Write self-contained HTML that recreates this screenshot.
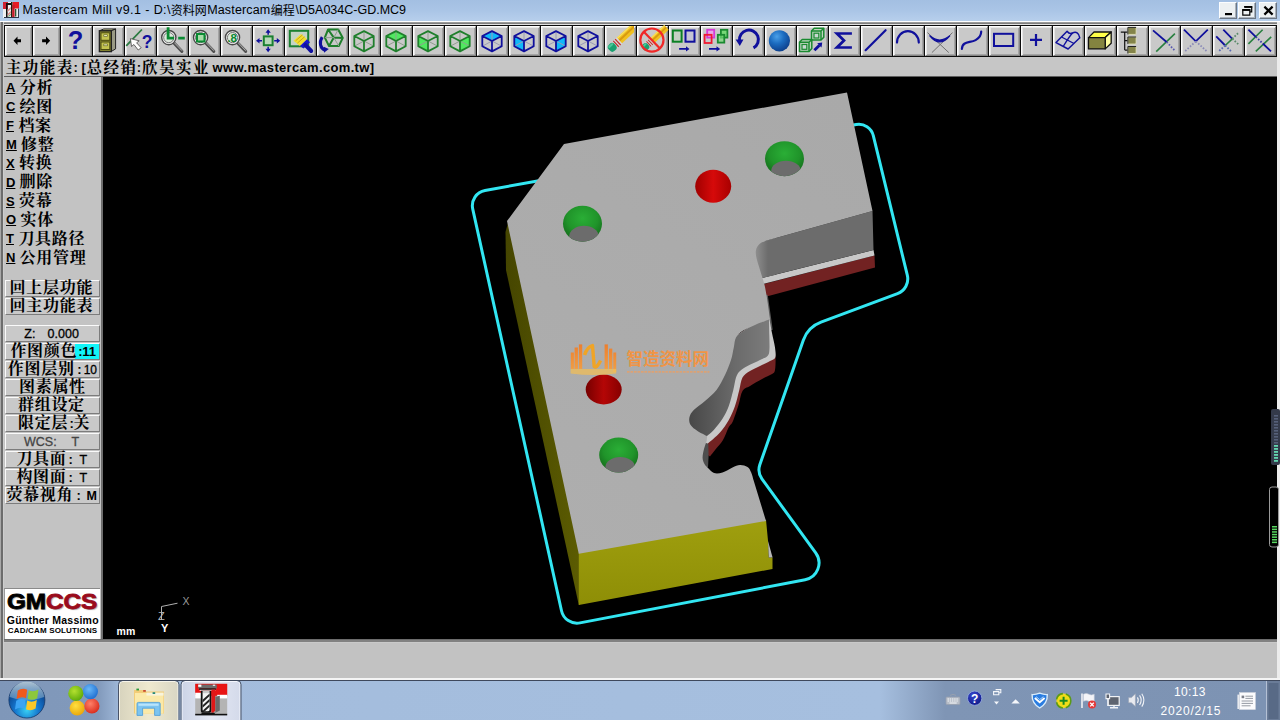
<!DOCTYPE html>
<html><head><meta charset="utf-8"><title>Mastercam Mill v9.1</title>
<style>
*{box-sizing:border-box;margin:0;padding:0}
html,body{width:1280px;height:720px;overflow:hidden;background:#c3c3c3;font-family:"Liberation Sans",sans-serif;}
svg{display:block;position:absolute;overflow:visible}
#win{position:absolute;left:0;top:0;width:1280px;height:680px;background:#c3c3c3;overflow:hidden}
#title{position:absolute;left:0;top:0;width:1280px;height:21px;background:linear-gradient(#a3bfe2,#aac5e6 50%,#b7cfec);}
#title span{position:absolute;top:3px;font-size:12.5px;line-height:14px;color:#000;white-space:pre}
.wb{position:absolute;top:2px;height:17px;background:#ecf0f2;border:1px solid;border-color:#fbfdff #6a7684 #6a7684 #fbfdff;box-shadow:inset -1px -1px 0 #aab2bc}
#lines{position:absolute;left:0;top:21px;width:1280px;height:4px;background:linear-gradient(#fff 0 1px,#9c9c9c 1px 2px,#7e7e7e 2px 3px,#e2e2e2 3px 4px)}
#edgeL{position:absolute;left:0;top:22px;width:4px;height:656px;background:linear-gradient(90deg,#a8a8a8 0 1.2px,#6c6c6c 1.2px 3px,#cdcdcd 3px 4px)}
#edgeR{position:absolute;left:1277px;top:22px;width:3px;height:658px;background:#ececec}
#tb{position:absolute;left:4px;top:25px;width:1273px;height:32px;background:#0c0c0c;}
.b{position:absolute;top:1px;height:30px;background:#c9c9c9;border:1px solid;border-color:#fdfdfd #858585 #858585 #fdfdfd;box-shadow:inset 1px 1px 0 #e6e6e6,inset -1px -1px 0 #a4a4a4}
#prompt{position:absolute;left:2px;top:57px;width:1275px;height:20px;background:#c6c6c6;border-bottom:1px solid #5e5e5e}
#prompt span{position:absolute;top:3px;font-size:13px;line-height:15px;font-weight:bold;white-space:pre;color:#000}
#panel{position:absolute;left:2px;top:77px;width:99px;height:562px;background:#c3c3c3;}
#panel .k{position:absolute;left:4px;font-size:13px;line-height:15px;font-weight:bold;color:#000;text-decoration:underline}
.pb{position:absolute;left:3px;width:95px;height:17px;background:#c9c9c9;border:1px solid;border-color:#fafafa #7c7c7c #7c7c7c #fafafa}
.pb span{position:absolute;top:1px;font-size:13px;line-height:14px;white-space:pre;color:#000}
#divid{position:absolute;left:101px;top:77px;width:2px;height:562px;background:#6e6e6e}
#view{position:absolute;left:103px;top:77px;width:1174px;height:562px;background:#000;overflow:hidden}
#status{position:absolute;left:2px;top:639px;width:1275px;height:39px;background:linear-gradient(#6c6c6c 0 1px,#818181 1px 3px,#c9c9c9 3px 4px,#c2c2c2 4px)}
#statusb{position:absolute;left:0;top:678px;width:1280px;height:2px;background:#f4f4f4}
#task{position:absolute;left:0;top:680px;width:1280px;height:40px;overflow:hidden}
#task span{position:absolute;color:#fff;font-size:12px;line-height:14px;white-space:pre}

</style></head>
<body>
<div id="win">
<div id="title">
<svg style="left:3px;top:2px" width="16" height="16" viewBox="0 0 16 16">
<rect x="0" y="0" width="16" height="16" fill="#eef0f2"/>
<rect x="0" y="0" width="5" height="7" fill="#d02030"/><rect x="9.5" y="0" width="6.5" height="6.5" fill="#e81c24"/>
<rect x="3" y="1" width="6" height="2" fill="#111"/><rect x="3" y="2" width="1.6" height="13" fill="#111"/>
<rect x="8" y="0" width="1.4" height="15" fill="#221"/><rect x="9.2" y="3" width="2.4" height="12" fill="#c41c28"/>
<path d="M4.6,8l3.2-3v2l-3.2,3zM4.6,12l3.2-3v2l-3.2,3z" fill="#e08a8a"/><path d="M4.6,14.5l3.2-3v1.6l-1.6,1.4z" fill="#6aa070"/>
<rect x="12" y="7" width="1.3" height="7.5" fill="#2a5a34"/><rect x="15" y="6.5" width="1" height="9.5" fill="#3a4656"/>
<rect x="1" y="15" width="15" height="1" fill="#2c3648"/></svg>
<span style="left:22.6px;letter-spacing:.4px">Mastercam Mill v9.1 - D:\</span>
<svg style="left:0;top:0" width="420" height="21"><g font-family="'Liberation Sans','Noto Sans CJK SC',sans-serif" font-size="12" fill="#000"><text x="170.8" y="14.6">资料网</text><text x="270.8" y="14.6">编程</text></g></svg>
<span style="left:207.2px;letter-spacing:.16px">Mastercam</span>
<span style="left:295.6px;letter-spacing:0">\D5A034C-GD.MC9</span>
<div class="wb" style="left:1219px;width:18px"><svg width="16" height="15" style="left:0;top:0"><rect x="5" y="10" width="7" height="2.2" fill="#000"/></svg></div>
<div class="wb" style="left:1238px;width:18px"><svg width="16" height="15" style="left:0;top:0"><path d="M5.7,4.2h7v4.6h-1.4M3.8,7.2h7v4.9h-7z" fill="none" stroke="#000" stroke-width="1.2"/><path d="M5.1,3.9h8.2M3.2,6.9h8.2" stroke="#000" stroke-width="1.9"/></svg></div>
<div class="wb" style="left:1259px;width:18px"><svg width="16" height="15" style="left:0;top:0"><path d="M4.4,3.6L12.6,11.6M12.6,3.6L4.4,11.6" stroke="#000" stroke-width="2.2"/></svg></div>
</div><div id="lines"></div>
<div id="tb">
<div class="b" style="left:1px;width:27px"></div>
<div class="b" style="left:29px;width:27px"></div>
<div class="b" style="left:57px;width:31px"></div>
<div class="b" style="left:89px;width:31px"></div>
<div class="b" style="left:121px;width:31px"></div>
<div class="b" style="left:153px;width:31px"></div>
<div class="b" style="left:185px;width:31px"></div>
<div class="b" style="left:217px;width:31px"></div>
<div class="b" style="left:249px;width:31px"></div>
<div class="b" style="left:281px;width:31px"></div>
<div class="b" style="left:313px;width:31px"></div>
<div class="b" style="left:345px;width:31px"></div>
<div class="b" style="left:377px;width:31px"></div>
<div class="b" style="left:409px;width:31px"></div>
<div class="b" style="left:441px;width:31px"></div>
<div class="b" style="left:473px;width:31px"></div>
<div class="b" style="left:505px;width:31px"></div>
<div class="b" style="left:537px;width:31px"></div>
<div class="b" style="left:569px;width:31px"></div>
<div class="b" style="left:601px;width:31px"></div>
<div class="b" style="left:633px;width:31px"></div>
<div class="b" style="left:665px;width:31px"></div>
<div class="b" style="left:697px;width:31px"></div>
<div class="b" style="left:729px;width:31px"></div>
<div class="b" style="left:761px;width:31px"></div>
<div class="b" style="left:793px;width:31px"></div>
<div class="b" style="left:825px;width:31px"></div>
<div class="b" style="left:857px;width:31px"></div>
<div class="b" style="left:889px;width:31px"></div>
<div class="b" style="left:921px;width:31px"></div>
<div class="b" style="left:953px;width:31px"></div>
<div class="b" style="left:985px;width:31px"></div>
<div class="b" style="left:1017px;width:31px"></div>
<div class="b" style="left:1049px;width:31px"></div>
<div class="b" style="left:1081px;width:31px"></div>
<div class="b" style="left:1113px;width:31px"></div>
<div class="b" style="left:1145px;width:31px"></div>
<div class="b" style="left:1177px;width:31px"></div>
<div class="b" style="left:1209px;width:31px"></div>
<div class="b" style="left:1241px;width:31px"></div>
</div>
<svg style="left:0;top:0" width="1280" height="60" viewBox="0 0 1280 60">
<polygon points="13.5,40.8 17.5,36.4 17.5,39.2 21,39.2 21,42.2 17.5,42.2 17.5,45.1" fill="#000"/>
<polygon points="50.2,40.8 46,36.4 46,39.2 42.1,39.2 42.1,42.2 46,42.2 46,45.1" fill="#000"/>
<text x="75.6" y="48.8" font-family="Liberation Sans" font-weight="bold" font-size="25.5" fill="#10109c" text-anchor="middle">?</text>
<polygon points="99.4,30.8 103.8,29 115.6,29 111.2,30.8" fill="#d8d8a0" stroke="#222" stroke-width="1"/>
<polygon points="111.2,30.8 115.6,29 115.6,48.9 111.2,51.5" fill="#9a9a84" stroke="#222" stroke-width="1"/>
<rect x="99.4" y="30.8" width="11.9" height="20.8" fill="#8c8c30" stroke="#222" stroke-width="1.4"/>
<rect x="101" y="32.8" width="8.8" height="7.5" fill="#c4c450" stroke="#4a4a10" stroke-width="1"/>
<rect x="103.8" y="34.8" width="3.5" height="1.8" fill="#f4f4c8" stroke="#55551a" stroke-width=".6"/>
<rect x="101" y="42" width="8.8" height="7.5" fill="#c4c450" stroke="#4a4a10" stroke-width="1"/>
<rect x="103.8" y="44" width="3.5" height="1.8" fill="#f4f4c8" stroke="#55551a" stroke-width=".6"/>
<path d="M126.2,45.8 L141.9,29.5" stroke="#2a7a40" stroke-width="1.8"/>
<path d="M130.4,38.6 L131.5,46.5 L133.9,44.5 L138.2,50 L141.2,47.8 L136.6,42.8 L139.2,40.8Z" fill="#fff" stroke="#555" stroke-width=".9"/>
<text x="147.2" y="47.6" font-family="Liberation Sans" font-weight="bold" font-size="17.5" fill="#10109c" text-anchor="middle">?</text>
<path d="M173.6,42.6L181.9,51.4" stroke="#505050" stroke-width="3" stroke-linecap="round"/><path d="M173.9,42.2L181.8,50.4" stroke="#b8b8b8" stroke-width="1" stroke-linecap="round"/><circle cx="168.8" cy="37.6" r="7.1" fill="#f2f2f2" stroke="#484848" stroke-width="1.4"/><circle cx="168.8" cy="37.6" r="5.1" fill="#dde8dd" stroke="#6a6a6a" stroke-width=".9"/>
<path d="M168.1,27.2 L168.1,38.2 L174,38.2 M178.2,38.2 L184.8,38.2" stroke="#0a8a32" stroke-width="2.8" fill="none"/>
<path d="M205.4,42.6L213.8,51.4" stroke="#505050" stroke-width="3" stroke-linecap="round"/><path d="M205.8,42.2L213.6,50.4" stroke="#b8b8b8" stroke-width="1" stroke-linecap="round"/><circle cx="200.6" cy="37.6" r="7.1" fill="#f2f2f2" stroke="#484848" stroke-width="1.4"/><circle cx="200.6" cy="37.6" r="5.1" fill="#dde8dd" stroke="#6a6a6a" stroke-width=".9"/>
<rect x="197" y="34" width="7.5" height="7.5" fill="#a8dca8" stroke="#0a8a32" stroke-width="2"/>
<path d="M237.3,42.6L245.7,51.4" stroke="#505050" stroke-width="3" stroke-linecap="round"/><path d="M237.7,42.2L245.5,50.4" stroke="#b8b8b8" stroke-width="1" stroke-linecap="round"/><circle cx="232.5" cy="37.6" r="7.1" fill="#f2f2f2" stroke="#484848" stroke-width="1.4"/><circle cx="232.5" cy="37.6" r="5.1" fill="#dde8dd" stroke="#6a6a6a" stroke-width=".9"/>
<text x="232.2" y="42.2" font-family="Liberation Sans" font-weight="bold" font-size="11.5" fill="#0a8a32" text-anchor="middle">.8</text>
<rect x="263.8" y="36.4" width="8.8" height="8.8" fill="#b8d8b8" stroke="#1a8030" stroke-width="2"/>
<path d="M268.1,29.2 L270.8,32.8 L268.9,32.8 L268.9,34.8 L267.4,34.8 L267.4,32.8 L265.5,32.8Z" fill="#10109c"/>
<path d="M268.1,52.2 L270.8,48.8 L268.9,48.8 L268.9,46.8 L267.4,46.8 L267.4,48.8 L265.5,48.8Z" fill="#10109c"/>
<path d="M256,40.8 L259.5,38.1 L259.5,40 L262,40 L262,41.5 L259.5,41.5 L259.5,43.4Z" fill="#10109c"/>
<path d="M280.2,40.8 L276.8,38.1 L276.8,40 L274.2,40 L274.2,41.5 L276.8,41.5 L276.8,43.4Z" fill="#10109c"/>
<rect x="289.8" y="30.8" width="18.4" height="15.5" fill="#c4d4c4" stroke="#1a8030" stroke-width="2"/>
<polygon points="293.5,40.8 301,34 307,39.2 300,46" fill="#f2de30"/>
<path d="M295.6,40.8 L302.5,34.9 M297.5,43 L304.6,36.8" stroke="#c8a818" stroke-width="1"/>
<polygon points="300,46 307,39.2 310,42.2 303.5,48.5" fill="#1818c8"/>
<path d="M305.6,45.1 L311.2,51" stroke="#1010a0" stroke-width="4" stroke-linecap="round"/>
<path d="M328.1,29.5 L338.2,29.5 L342.8,37.9 L338.8,46 L329,46 L324.8,37.6Z M333.8,37.6L328.1,29.5M333.8,37.6L342.8,37.9M333.8,37.6L329,46" stroke="#1f7f2c" stroke-width="2" fill="none" stroke-linejoin="round"/>
<path d="M333.8,37.6 L338.2,29.5 M333.8,37.6 L338.8,46 M333.8,37.6 L324.8,37.6" stroke="#8fa08f" stroke-width="1" fill="none"/>
<path d="M322.2,37.2 C319,42 320,48.5 325.2,50.2" stroke="#10109c" stroke-width="3" fill="none"/>
<polygon points="323.8,46.8 328.8,49 324,52.8" fill="#10109c"/>
<path d="M364,41L364,31.1M364,41L354.3,46.2M364,41L373.7,46.2" stroke="#8fa08f" stroke-width="1" fill="none"/><path d="M364,31.1L373.7,36L373.7,46.2L364,51.4L354.3,46.2L354.3,36ZM364,41L354.3,36M364,41L373.7,36M364,41L364,51.4" stroke="#1f7f2c" stroke-width="1.8" fill="none" stroke-linejoin="round"/>
<polygon points="396,31.1 405.7,36 396,41 386.3,36" fill="#50e860"/><path d="M396,41L396,31.1M396,41L386.3,46.2M396,41L405.7,46.2" stroke="#8fa08f" stroke-width="1" fill="none"/><path d="M396,31.1L405.7,36L405.7,46.2L396,51.4L386.3,46.2L386.3,36ZM396,41L386.3,36M396,41L405.7,36M396,41L396,51.4" stroke="#1f7f2c" stroke-width="1.8" fill="none" stroke-linejoin="round"/>
<polygon points="418.3,36 428,41 428,51.4 418.3,46.2" fill="#50e860"/><path d="M428,41L428,31.1M428,41L418.3,46.2M428,41L437.7,46.2" stroke="#8fa08f" stroke-width="1" fill="none"/><path d="M428,31.1L437.7,36L437.7,46.2L428,51.4L418.3,46.2L418.3,36ZM428,41L418.3,36M428,41L437.7,36M428,41L428,51.4" stroke="#1f7f2c" stroke-width="1.8" fill="none" stroke-linejoin="round"/>
<polygon points="469.7,36 469.7,46.2 460,51.4 460,41" fill="#50e860"/><path d="M460,41L460,31.1M460,41L450.3,46.2M460,41L469.7,46.2" stroke="#8fa08f" stroke-width="1" fill="none"/><path d="M460,31.1L469.7,36L469.7,46.2L460,51.4L450.3,46.2L450.3,36ZM460,41L450.3,36M460,41L469.7,36M460,41L460,51.4" stroke="#1f7f2c" stroke-width="1.8" fill="none" stroke-linejoin="round"/>
<polygon points="492,31.1 501.7,36 492,41 482.3,36" fill="#10b8f8"/><path d="M492,41L492,31.1M492,41L482.3,46.2M492,41L501.7,46.2" stroke="#9a9ab8" stroke-width="1" fill="none"/><path d="M492,31.1L501.7,36L501.7,46.2L492,51.4L482.3,46.2L482.3,36ZM492,41L482.3,36M492,41L501.7,36M492,41L492,51.4" stroke="#10109c" stroke-width="1.8" fill="none" stroke-linejoin="round"/>
<polygon points="514.3,36 524,41 524,51.4 514.3,46.2" fill="#10b8f8"/><path d="M524,41L524,31.1M524,41L514.3,46.2M524,41L533.7,46.2" stroke="#9a9ab8" stroke-width="1" fill="none"/><path d="M524,31.1L533.7,36L533.7,46.2L524,51.4L514.3,46.2L514.3,36ZM524,41L514.3,36M524,41L533.7,36M524,41L524,51.4" stroke="#10109c" stroke-width="1.8" fill="none" stroke-linejoin="round"/>
<polygon points="565.7,36 565.7,46.2 556,51.4 556,41" fill="#10b8f8"/><path d="M556,41L556,31.1M556,41L546.3,46.2M556,41L565.7,46.2" stroke="#9a9ab8" stroke-width="1" fill="none"/><path d="M556,31.1L565.7,36L565.7,46.2L556,51.4L546.3,46.2L546.3,36ZM556,41L546.3,36M556,41L565.7,36M556,41L556,51.4" stroke="#10109c" stroke-width="1.8" fill="none" stroke-linejoin="round"/>
<path d="M588,41L588,31.1M588,41L578.3,46.2M588,41L597.7,46.2" stroke="#9a9ab8" stroke-width="1" fill="none"/><path d="M588,31.1L597.7,36L597.7,46.2L588,51.4L578.3,46.2L578.3,36ZM588,41L578.3,36M588,41L597.7,36M588,41L588,51.4" stroke="#10109c" stroke-width="1.8" fill="none" stroke-linejoin="round"/>
<clipPath id="cp20"><rect x="605" y="26" width="29" height="29"/></clipPath>
<g clip-path="url(#cp20)"><g transform="translate(622.1,38.1) rotate(-43) scale(1.0)"><rect x="-4" y="-3.8" width="24" height="7.6" fill="#f0c020"/><rect x="-4" y="-1.2" width="24" height="2" fill="#d89a10"/><rect x="-4" y="-3.8" width="24" height="1.4" fill="#f8e060"/><rect x="-10" y="-4" width="6.5" height="8" fill="#d8d8d8"/><rect x="-9" y="-4" width="1.3" height="8" fill="#c03030"/><rect x="-6.4" y="-4" width="1.3" height="8" fill="#c03030"/><rect x="-17.5" y="-4.2" width="8" height="8.4" rx="3.4" fill="#1aa070"/><rect x="-16.4" y="-3.4" width="6" height="2.2" rx="1" fill="#48c898"/></g></g>
<g transform="translate(654,39) rotate(-43) scale(0.85)"><rect x="-4" y="-3.8" width="24" height="7.6" fill="#f0c020"/><rect x="-4" y="-1.2" width="24" height="2" fill="#d89a10"/><rect x="-4" y="-3.8" width="24" height="1.4" fill="#f8e060"/><rect x="-10" y="-4" width="6.5" height="8" fill="#d8d8d8"/><rect x="-9" y="-4" width="1.3" height="8" fill="#c03030"/><rect x="-6.4" y="-4" width="1.3" height="8" fill="#c03030"/><rect x="-17.5" y="-4.2" width="8" height="8.4" rx="3.4" fill="#1aa070"/><rect x="-16.4" y="-3.4" width="6" height="2.2" rx="1" fill="#48c898"/></g>
<circle cx="651.9" cy="40.1" r="11.6" fill="none" stroke="#f02828" stroke-width="2.2"/>
<path d="M643.8,31.8 L660,48.5" stroke="#f02828" stroke-width="2.2"/>
<rect x="672.8" y="30.5" width="8.8" height="11.2" fill="#c4d0c4" stroke="#0a8024" stroke-width="2"/>
<rect x="685.5" y="30.5" width="9" height="11.2" fill="#c4c4d4" stroke="#10109c" stroke-width="2"/>
<path d="M679.1,48 L686,48 L686,46.2 L689.5,48.9 L686,51.5 L686,49.8 L679.1,49.8Z" fill="#10109c"/>
<rect x="707.2" y="29.8" width="7" height="7.8" fill="#e8a8e8" stroke="#d838d8" stroke-width="1.8"/>
<rect x="704.6" y="34.8" width="7" height="8.2" fill="none" stroke="#f01830" stroke-width="1.8"/>
<rect x="720.9" y="29.8" width="6.5" height="7.8" fill="#78d878" stroke="#1a8a30" stroke-width="1.8"/>
<rect x="717.8" y="34.8" width="6.5" height="7.8" fill="#78d878" fill-opacity=".7" stroke="#1a8a30" stroke-width="1.8"/>
<path d="M709,48 L716.5,48 L716.5,46.2 L720.2,48.9 L716.5,51.5 L716.5,49.8 L709,49.8Z" fill="#10109c"/>
<path d="M753.5,47.9 A9.5,9.5 0 1 0 739.5,40.8" stroke="#10109c" stroke-width="3" fill="none"/>
<polygon points="735.6,39.5 743.5,39.5 739.8,46" fill="#10109c"/>
<defs><radialGradient id="gsp" cx=".38" cy=".3" r=".75"><stop offset="0" stop-color="#4aa0e8"/><stop offset=".45" stop-color="#1c6cc0"/><stop offset="1" stop-color="#0c3c88"/></radialGradient></defs>
<circle cx="779.4" cy="40.8" r="10.6" fill="url(#gsp)"/>
<path d="M811.5,31 L814.2,28.2 L823.8,28.2 L823.8,37.2 L821,40.1 L811.5,40.1Z" fill="#c0d4c0" stroke="#1a8a30" stroke-width="1.5" stroke-linejoin="round"/><path d="M811.5,31 L821,31 L821,40.1 M821,31 L823.8,28.2" fill="none" stroke="#1a8a30" stroke-width="1.5"/><rect x="814" y="33.2" width="4.8" height="4.8" fill="#c8d8d0" stroke="#1a8a30" stroke-width="1.2"/>
<path d="M799.5,42.2 L802.2,39.5 L811.8,39.5 L811.8,48.5 L809,51.4 L799.5,51.4Z" fill="#c0d4c0" stroke="#1a8a30" stroke-width="1.5" stroke-linejoin="round"/><path d="M799.5,42.2 L809,42.2 L809,51.4 M809,42.2 L811.8,39.5" fill="none" stroke="#1a8a30" stroke-width="1.5"/><rect x="802" y="44.5" width="4.8" height="4.8" fill="#c8d8d0" stroke="#1a8a30" stroke-width="1.2"/>
<path d="M814.4,50.2 L819.5,45.2" stroke="#10109c" stroke-width="3"/>
<polygon points="822.2,42.5 821.5,47.5 817.2,43.2" fill="#10109c"/>
<path d="M851.9,33.5 L836.9,33.5 L844,40.5 L836.9,47.5 L851.9,47.5" stroke="#10109c" stroke-width="2.7" fill="none" stroke-linejoin="miter"/>
<path d="M865.6,50.2 L885.6,30.2" stroke="#10109c" stroke-width="2.2" stroke-linecap="round"/>
<path d="M897,42.6 A10.9,11.5 0 0 1 918.8,42.6" stroke="#10109c" stroke-width="2.2" fill="none" stroke-linecap="round"/>
<path d="M927.5,32.6 L948.8,52.6 M952.5,32.6 L931.9,52.6" stroke="#707070" stroke-width="1"/>
<path d="M929.8,35.8 Q939.6,44.2 949.8,35.8 Q939.6,48.2 929.8,35.8Z" fill="#10109c" stroke="#10109c" stroke-width="1.2" stroke-linejoin="round"/>
<path d="M961.9,49 C962.2,40.8 970,43.2 975.6,40.1 C980,37.6 981.2,35.1 981.2,31.5" stroke="#10109c" stroke-width="2.2" fill="none" stroke-linecap="round"/>
<rect x="994" y="33.8" width="19.2" height="12.2" fill="none" stroke="#10109c" stroke-width="2"/>
<path d="M1030,39.9 L1042,39.9 M1036,33.9 L1036,45.9" stroke="#10109c" stroke-width="2.2"/>
<path d="M1056,42.6 L1067.1,31.2 Q1069.4,34.5 1072.5,33 Q1078.1,30.5 1079.8,37.8 L1068.1,49Z" fill="#c8cad4" stroke="#10109c" stroke-width="1.5" stroke-linejoin="round"/>
<path d="M1061.5,37 L1074,43.5 M1072.5,33 Q1069.4,36.4 1063.5,46" fill="none" stroke="#10109c" stroke-width="1.4"/>
<polygon points="1088.5,37.6 1094,32 1111.2,32 1105.2,37.6" fill="#ffff48" stroke="#111" stroke-width="1.3" stroke-linejoin="round"/>
<polygon points="1105.2,37.6 1111.2,32 1111.2,43.2 1105.2,48.9" fill="#ffffa0" stroke="#111" stroke-width="1.3" stroke-linejoin="round"/>
<polygon points="1088.5,37.6 1105.2,37.6 1105.2,48.9 1088.5,48.9" fill="#848440" stroke="#111" stroke-width="1.3" stroke-linejoin="round"/>
<path d="M1120.8,32.1 L1127.9,32.1 M1124.7,32.1 L1124.7,50.1 M1124.7,40.7 L1127.9,40.7 M1124.7,50.1 L1127.9,50.1" stroke="#111" stroke-width="1.2" fill="none"/>
<rect x="1127.9" y="27.4" width="8.2" height="7" rx="1" fill="#84844a" stroke="#e8e8c0" stroke-width=".8"/>
<path d="M1127.9,34.4 L1127.9,27.4 L1136.1,27.4" stroke="#222" stroke-width="1" fill="none"/>
<rect x="1127.9" y="37" width="8.2" height="7" rx="1" fill="#84844a" stroke="#e8e8c0" stroke-width=".8"/>
<path d="M1127.9,43.9 L1127.9,37 L1136.1,37" stroke="#222" stroke-width="1" fill="none"/>
<rect x="1127.9" y="46.5" width="8.2" height="7" rx="1" fill="#84844a" stroke="#e8e8c0" stroke-width=".8"/>
<path d="M1127.9,53.5 L1127.9,46.5 L1136.1,46.5" stroke="#222" stroke-width="1" fill="none"/>
<path d="M1174.9,33.6 L1156.2,51.6" stroke="#2a8040" stroke-width="1.6"/>
<path d="M1153,30.4 L1166.6,42" stroke="#10109c" stroke-width="1.8"/>
<path d="M1166.6,42 L1175.3,51.1" stroke="#5a5ab0" stroke-width="1.8" stroke-dasharray="1.6 1.6"/>
<path d="M1184,29.7 L1195.8,41.3 L1207.8,29.7" stroke="#10109c" stroke-width="1.8" fill="none"/>
<path d="M1195.8,41.3 L1184.3,51.9 M1195.8,41.3 L1207.5,51.9" stroke="#8a8ab8" stroke-width="1.8" stroke-dasharray="1.6 1.6"/>
<path d="M1223.3,29.7 L1232.3,38.8 M1216.2,36.4 L1225.2,45.5" stroke="#10109c" stroke-width="1.8"/>
<path d="M1232.3,38.8 L1225.2,45.5" stroke="#2a8040" stroke-width="1.6"/>
<path d="M1232.3,38.8 L1239,32.3 M1232.3,38.8 L1239,44.9" stroke="#5a8a6a" stroke-width="1.8" stroke-dasharray="1.6 1.6"/>
<path d="M1225.2,45.5 L1218.1,51.9 M1225.2,45.5 L1231.7,51.9" stroke="#5a6ab0" stroke-width="1.8" stroke-dasharray="1.6 1.6"/>
<path d="M1262.6,29.7 L1248.4,43.9 M1271.2,36.8 L1255.8,51.3" stroke="#2a8040" stroke-width="1.6"/>
<path d="M1248.4,29.7 L1255.8,36.8 M1262.8,43.5 L1271,51.3" stroke="#10109c" stroke-width="1.8"/>
<path d="M1255.8,36.8 L1262.8,43.5" stroke="#3a3aa8" stroke-width="1.8" stroke-dasharray="1.6 1.6"/>
</svg>
<div id="prompt">
<svg style="left:0;top:0" width="300" height="20"><g font-family="'Liberation Serif','Noto Serif CJK SC',serif" font-size="15.5" font-weight="bold" fill="#000" letter-spacing="1.5"><text x="3.8" y="16">主功能表</text><text x="84.6" y="16">总经销</text><text x="140" y="16">欣昊实业</text></g></svg>
<span style="left:71.6px">:</span><span style="left:79.6px">[</span><span style="left:134.8px">:</span>
<span style="left:210.6px;letter-spacing:.33px">www.mastercam.com.tw]</span>
</div>
<div id="panel">
<span class="k" style="top:3.1px">A</span>
<span class="k" style="top:22.0px">C</span>
<span class="k" style="top:40.9px">F</span>
<span class="k" style="top:59.8px">M</span>
<span class="k" style="top:78.7px">X</span>
<span class="k" style="top:97.6px">D</span>
<span class="k" style="top:116.5px">S</span>
<span class="k" style="top:135.4px">O</span>
<span class="k" style="top:154.3px">T</span>
<span class="k" style="top:173.2px">N</span>
<div class="pb" style="top:203px"></div>
<div class="pb" style="top:221px"></div>
<div class="pb" style="top:248px"><span style="left:18.3px;font-size:12.5px;-webkit-text-stroke:.3px #000">Z:</span><span style="left:41.6px;font-size:12.5px;-webkit-text-stroke:.3px #000">0.000</span></div>
<div class="pb" style="top:266px"><div style="position:absolute;left:69px;top:0;width:24px;height:15px;background:#10f4f8"></div><span style="left:72.2px;font-weight:bold;font-size:13px;letter-spacing:-.2px">:11</span></div>
<div class="pb" style="top:284px"><span style="left:71.2px;font-weight:bold">:</span><span style="left:77.8px;font-size:12px;letter-spacing:-.3px;-webkit-text-stroke:.3px #000">10</span></div>
<div class="pb" style="top:302px"></div>
<div class="pb" style="top:320px"></div>
<div class="pb" style="top:338px"><span style="left:63.6px;font-weight:bold">:</span></div>
<div class="pb" style="top:356px"><span style="left:18.0px;color:#444;font-size:12.5px;-webkit-text-stroke:.3px #444">WCS:</span><span style="left:65.4px;color:#444;font-size:12.5px;-webkit-text-stroke:.3px #444">T</span></div>
<div class="pb" style="top:374px"><span style="left:62.6px;font-weight:bold">:</span><span style="left:73.6px;font-size:12.5px;-webkit-text-stroke:.3px #000">T</span></div>
<div class="pb" style="top:392px"><span style="left:62.6px;font-weight:bold">:</span><span style="left:73.6px;font-size:12.5px;-webkit-text-stroke:.3px #000">T</span></div>
<div class="pb" style="top:410px"><span style="left:70.4px;font-weight:bold">:</span><span style="left:80.6px;font-weight:bold;font-size:12.5px">M</span></div>
<svg style="left:0;top:0" width="99" height="562"><g font-family="'Liberation Serif','Noto Serif CJK SC',serif" font-size="16" font-weight="bold" fill="#000" letter-spacing=".7">
<text x="17.8" y="15.8">分析</text>
<text x="17.6" y="34.7">绘图</text>
<text x="16.4" y="53.6">档案</text>
<text x="19" y="72.5">修整</text>
<text x="17" y="91.4">转换</text>
<text x="17.6" y="110.3">删除</text>
<text x="17" y="129.2">荧幕</text>
<text x="18.6" y="148.1">实体</text>
<text x="16.4" y="167">刀具路径</text>
<text x="17.6" y="185.9">公用管理</text>
<text x="7.6" y="216.4">回上层功能</text>
<text x="7.6" y="234.4">回主功能表</text>
<text x="8.4" y="279.4">作图颜色</text>
<text x="5.8" y="297.4">作图层别</text>
<text x="17" y="315.4">图素属性</text>
<text x="16" y="333.4">群组设定</text>
<text x="16" y="351.4">限定层</text>
<text x="71.4" y="351.4">关</text>
<text x="14.4" y="387.4">刀具面</text>
<text x="14.4" y="405.4">构图面</text>
<text x="4.4" y="423.4">荧幕视角</text>
</g></svg>
<div style="position:absolute;left:2px;top:511px;width:96px;height:51px;background:#fff;border-top:1px solid #8a8a8a;border-left:1px solid #9a9a9a">
<span style="position:absolute;left:1.8px;top:1px;font-size:21.5px;line-height:24px;font-weight:bold;letter-spacing:-.1px;color:#000;-webkit-text-stroke:.8px #000;text-shadow:1px 1px 1px #aaa;white-space:pre;transform:scaleX(1.135);transform-origin:0 0">GM<span style="color:#9a0c1c;-webkit-text-stroke:.8px #9a0c1c">CCS</span></span>
<span style="position:absolute;left:1.8px;top:25.4px;font-size:10.5px;line-height:12px;font-weight:bold;color:#000;white-space:pre;letter-spacing:.22px">Günther Massimo</span>
<span style="position:absolute;left:2.8px;top:36.6px;font-size:8px;line-height:10px;font-weight:bold;color:#000;white-space:pre;letter-spacing:.17px">CAD/CAM SOLUTIONS</span>
</div>
</div><div id="divid"></div>
<div id="view">
<svg style="left:-103px;top:-77px" width="1280" height="720" viewBox="0 0 1280 720">
<defs>
<linearGradient id="gw2" x1="690" y1="0" x2="770" y2="0" gradientUnits="userSpaceOnUse"><stop offset="0" stop-color="#484848"/><stop offset=".55" stop-color="#6a6a6a"/><stop offset="1" stop-color="#7c7c7c"/></linearGradient>
<linearGradient id="gw1" x1="755" y1="0" x2="768" y2="0" gradientUnits="userSpaceOnUse"><stop offset="0" stop-color="#909090"/><stop offset="1" stop-color="#6c6c6c"/></linearGradient>
<linearGradient id="gtop" x1="560" y1="560" x2="850" y2="100" gradientUnits="userSpaceOnUse"><stop offset="0" stop-color="#aeaeae"/><stop offset="1" stop-color="#a9a9a9"/></linearGradient>
<linearGradient id="gyel" x1="0" y1="525" x2="0" y2="605" gradientUnits="userSpaceOnUse"><stop offset="0" stop-color="#9e9e0e"/><stop offset="1" stop-color="#8e8e06"/></linearGradient>
<linearGradient id="gol" x1="500" y1="0" x2="580" y2="0" gradientUnits="userSpaceOnUse"><stop offset="0" stop-color="#444400"/><stop offset="1" stop-color="#5c5c02"/></linearGradient>
<radialGradient id="ggr" cx=".5" cy=".35" r=".65"><stop offset="0" stop-color="#2aae36"/><stop offset=".6" stop-color="#20942a"/><stop offset="1" stop-color="#156c1c"/></radialGradient>
<linearGradient id="grd1" x1="0" y1="0" x2="1" y2="0"><stop offset="0" stop-color="#a00000"/><stop offset=".5" stop-color="#d60a0a"/><stop offset="1" stop-color="#a80000"/></linearGradient>
<linearGradient id="grd" x1="0" y1="0" x2="1" y2="0"><stop offset="0" stop-color="#760000"/><stop offset=".5" stop-color="#b40606"/><stop offset="1" stop-color="#860000"/></linearGradient>
</defs>
<path d="M550,178.7 L485,190.5 C476.4,192 470.9,200.4 472.7,208.9 L561.5,610.7 C563.3,619.1 571.5,624.5 580,622.9 L805.1,579.8 C817.4,577.5 823.1,563.1 815.7,552.9 L761.9,478.9 C759,474.8 758.2,469.6 759.8,464.8 L803.3,340.2 C806.2,331.8 812.7,325.2 821,322.1 L897.5,293.7 C905,290.9 909.2,283 907.3,275.2 L873.3,135.6 C871.5,128 864,123.1 856.2,124.5 L848,126" fill="none" stroke="#32e6f2" stroke-width="3" stroke-linejoin="round"/>
<path d="M508.5,221 L580,553.5 L580,604.8 L578.8,605 L506,270 L505.5,232Z" fill="url(#gol)"/>
<path d="M578.8,552.5 L766,519.8 L768.5,546 L768.8,557.5 L772.5,557.5 L772.5,569 L578.8,605Z" fill="url(#gyel)"/>
<path d="M768,541 L772.6,557.5 L768.8,557.5Z" fill="#b8b8b8"/>
<path d="M760,284.9 L874.5,255.5 L875,267.5 L767.5,296.2 L760,296Z" fill="#722222"/>
<path d="M758,279 L873.5,250 L874.5,255.5 L758,285.4Z" fill="#c8c8c8"/>
<path d="M750,240 L766,240.7 L872.5,211 L873.5,250 L763.8,277.5 L750,280Z" fill="#6c6c6c"/>
<path d="M750,240 L766,240.7 L775,238.2 L775,275 L763.8,277.5 L750,280Z" fill="url(#gw1)"/>
<path d="M766.5,295 L770,319 L771.5,330" stroke="#5a5a5a" stroke-width="2.4" fill="none"/>
<path d="M775.3,355 C775.3,355.8 775.6,357.5 775.6,360 C775.6,362.5 775.5,367.7 775,370 C774.5,372.3 774.6,372.3 772.5,373.8 C770.4,375.2 766.2,376.7 762.5,378.8 C758.8,380.8 753.3,384 750,386 C746.7,388 744.4,387.8 742.5,391 C740.6,394.2 740.1,400 738.5,405 C736.9,410 734.6,417.2 733,421 C731.4,424.8 730.3,424.3 728.6,427.5 C726.9,430.7 725.1,436.5 723,440 C720.9,443.5 718.2,446 716,448.8 C713.8,451.5 711,455.2 710,456.5 L700,450 L690,430 L685,415 L720,380 L730,340 L760,320Z" fill="#722222"/>
<path d="M769.5,319 C769.9,321.3 771.1,328.2 772,333 C772.9,337.8 774.5,343.4 775,347.5 C775.5,351.6 776.1,355.2 775.3,357.5 C774.5,359.8 772.5,359.6 770,361 C767.5,362.4 763.3,364.3 760,366 C756.7,367.7 752.9,369.1 750,371 C747.1,372.9 744.3,374.3 742.5,377.5 C740.7,380.7 740.5,385.2 739.3,390 C738,394.8 736.8,401 735,406 C733.2,411 731.2,415.6 728.8,420 C726.2,424.4 723.5,428.5 720,432.5 C716.5,436.5 709.6,441.9 707.5,443.8 L700,450 L690,430 L685,415 L720,380 L730,340 L760,320Z" fill="#c8c8c8"/>
<path d="M769,319 C769,321.7 769.2,329.8 769.3,335 C769.4,340.2 769.7,346.5 769.4,350 C769.1,353.5 769.1,354.3 767.5,356 C765.9,357.7 763.3,358.3 760,360 C756.7,361.7 750.8,364.2 747.5,366 C744.2,367.8 741.9,369.1 740,371 C738.1,372.9 737.1,374.3 736,377.5 C734.9,380.7 734.5,385.2 733.3,390 C732.1,394.8 730.5,401.2 728.8,406 C727,410.8 725,414.8 722.5,418.8 C720,422.8 716.3,427.1 713.8,430 C711.2,432.9 708.1,435 707,436 L700,450 L690,430 L685,415 L720,380 L730,340 L760,320Z" fill="url(#gw2)"/>
<path d="M700,440 L708.3,444 L708.6,456 L708,467.5 L700,467Z" fill="#4e4e4e"/>
<path d="M564,144 L847,92.5 L872.5,211 L766,240.7 C764.9,241.2 761.2,242.4 759.5,244 C757.8,245.6 756.5,247.7 756,250 C755.5,252.3 755.8,254.7 756.5,258 C757.2,261.3 758.8,265.8 760,270 C761.2,274.2 762.9,278.8 764,283 C765.1,287.2 765.5,289 766.5,295 C767.5,301 769.4,315 770,319 L769,319.4 C766.7,320.3 759.4,323.1 755,325 C750.6,326.9 745.7,328.9 742.5,331 C739.3,333.1 737.5,334.8 736,337.5 C734.5,340.2 734.6,343.8 733.8,347.5 C732.9,351.2 732.5,355.4 731,360 C729.5,364.6 727.4,370 725,375 C722.6,380 719.8,385.7 716.5,390 C713.2,394.3 708.8,397.7 705,401 C701.2,404.3 696.4,407.2 693.8,410 C691.1,412.8 689.9,415 689.4,417.5 C688.9,420 689.2,422.8 690.6,425 C692,427.2 694.8,429.2 697.5,431 C700.2,432.8 705.4,435.2 707,436 L707,436 C706.9,436.8 707.1,438.8 706.6,441 C706.1,443.2 704.7,446.2 704,449 C703.3,451.8 702.5,455.5 702.6,458 C702.7,460.5 703.6,462.3 704.5,464 C705.4,465.7 706.4,466.5 708,468 C709.6,469.5 711.6,472.2 714,473 C716.4,473.8 719.4,473.4 722.5,472.5 C725.6,471.6 729.6,468.8 732.5,467.5 C735.4,466.2 737.5,465.1 740,465 C742.5,464.9 745.6,465.8 747.5,467 C749.4,468.2 750.2,470.3 751.2,472.5 C752.2,474.7 753.1,478.8 753.5,480 L766,521 L578.75,553.75 L507,221Z" fill="url(#gtop)"/>
<ellipse cx="582.5" cy="223.7" rx="19.5" ry="18" fill="url(#ggr)"/><clipPath id="c582"><ellipse cx="582.5" cy="223.7" rx="19.5" ry="18"/></clipPath><ellipse cx="584.0" cy="236.29999999999998" rx="14.82" ry="10.44" fill="#6c6c6c" clip-path="url(#c582)"/>
<ellipse cx="784.5" cy="158.7" rx="19.5" ry="17.5" fill="url(#ggr)"/><clipPath id="c784"><ellipse cx="784.5" cy="158.7" rx="19.5" ry="17.5"/></clipPath><ellipse cx="786.0" cy="170.95" rx="14.82" ry="10.149999999999999" fill="#6c6c6c" clip-path="url(#c784)"/>
<ellipse cx="618.7" cy="455" rx="19.5" ry="17.5" fill="url(#ggr)"/><clipPath id="c618"><ellipse cx="618.7" cy="455" rx="19.5" ry="17.5"/></clipPath><ellipse cx="620.2" cy="467.25" rx="14.82" ry="10.149999999999999" fill="#6c6c6c" clip-path="url(#c618)"/>
<ellipse cx="713.2" cy="186.2" rx="18" ry="16.5" fill="url(#grd1)"/>
<ellipse cx="603.7" cy="389.5" rx="18" ry="15" fill="url(#grd)"/>
<defs><linearGradient id="gwm" x1="0" y1="344" x2="0" y2="376" gradientUnits="userSpaceOnUse"><stop offset="0" stop-color="#f47a20"/><stop offset=".75" stop-color="#f89a38"/><stop offset="1" stop-color="#f8c860"/></linearGradient></defs>
<g opacity=".9"><rect x="570.8" y="352.5" width="3.1" height="16.5" fill="url(#gwm)"/><rect x="574.6" y="347.5" width="3.3" height="21.5" fill="url(#gwm)"/><rect x="578.9" y="344.4" width="3.3" height="24.600000000000023" fill="url(#gwm)"/><rect x="604.6" y="344.4" width="3.3" height="24.600000000000023" fill="url(#gwm)"/><rect x="609" y="348.6" width="3.3" height="20.399999999999977" fill="url(#gwm)"/><rect x="613.3" y="352.5" width="2.9" height="19.5" fill="url(#gwm)"/><path d="M584.6,355 Q587,347 592.5,345.6 L594.2,366.5 Q596.5,369 600.6,360.5" fill="none" stroke="#f8a418" stroke-width="3.4" stroke-linejoin="round"/><path d="M570.6,369 h45.6 v4.4 q-22,3 -45.6,0z" fill="#f8c050" opacity=".75"/><text x="626.6" y="364.6" font-family="'Liberation Sans','Noto Sans CJK SC',sans-serif" font-size="16.5" font-weight="bold" fill="#f8923a">智造资料网</text><path d="M627,371.8 H709.4" stroke="#f0a060" stroke-width="1.8" stroke-dasharray="2.6 .9" opacity=".8"/></g>
</svg>
<svg style="left:-103px;top:-77px" width="1280" height="720" viewBox="0 0 1280 720" shape-rendering="crispEdges">
<text x="116.6" y="635.2" font-family="'Liberation Sans',sans-serif" font-size="10.5" font-weight="bold" fill="#fff">mm</text>
<path d="M161.5,606.5 L177.5,603.2 M161.5,606.5 L161.5,611" stroke="#b0b0b0" stroke-width="1" fill="none" shape-rendering="auto"/>
<text x="186" y="604.6" font-family="'Liberation Sans',sans-serif" font-size="10.5" fill="#9a9a9a" text-anchor="middle">X</text>
<path d="M161.5,611V620" stroke="#b8b8b8" stroke-width="1" fill="none" shape-rendering="auto"/>
<text x="161.3" y="620" font-family="'Liberation Sans',sans-serif" font-size="11" fill="#b8b8b8" text-anchor="middle">Z</text>
<text x="164.7" y="632.2" font-family="'Liberation Sans',sans-serif" font-size="11" font-weight="bold" fill="#fff" text-anchor="middle">Y</text>
</svg>
</div>
<div id="status"></div>
<div id="edgeL"></div><div id="edgeR"></div>
<svg style="left:0;top:0" width="1280" height="720" viewBox="0 0 1280 720">
<rect x="1271" y="409" width="9" height="56" rx="2" fill="#343a4a"/>
<rect x="1274" y="415" width="4" height="1.6" fill="#56607a"/>
<rect x="1274" y="418" width="4" height="1.6" fill="#56607a"/>
<rect x="1274" y="421" width="4" height="1.6" fill="#56607a"/>
<rect x="1274" y="424" width="4" height="1.6" fill="#56607a"/>
<rect x="1274" y="427" width="4" height="1.6" fill="#56607a"/>
<rect x="1274" y="430" width="4" height="1.6" fill="#56607a"/>
<rect x="1274" y="433" width="4" height="1.6" fill="#56607a"/>
<rect x="1274" y="436" width="4" height="1.6" fill="#56607a"/>
<rect x="1274" y="439" width="4" height="1.6" fill="#56607a"/>
<rect x="1274" y="442" width="4" height="1.6" fill="#56607a"/>
<rect x="1274" y="445" width="4" height="1.8" fill="#63d6b0"/>
<rect x="1274" y="448" width="4" height="1.8" fill="#63d6b0"/>
<rect x="1274" y="451" width="4" height="1.8" fill="#63d6b0"/>
<rect x="1274" y="454" width="4" height="1.8" fill="#63d6b0"/>
<rect x="1274" y="457" width="4" height="1.8" fill="#63d6b0"/>
<rect x="1274" y="460" width="4" height="1.8" fill="#63d6b0"/>
<rect x="1269.5" y="487" width="9" height="60" rx="2.5" fill="#000" stroke="#9a9a9a" stroke-width="1"/>
<rect x="1272" y="526.0" width="5" height="1.5" fill="#58d860"/>
<rect x="1272" y="528.6" width="5" height="1.5" fill="#58d860"/>
<rect x="1272" y="531.2" width="5" height="1.5" fill="#58d860"/>
<rect x="1272" y="533.8" width="5" height="1.5" fill="#58d860"/>
<rect x="1272" y="536.4" width="5" height="1.5" fill="#58d860"/>
<rect x="1272" y="539.0" width="5" height="1.5" fill="#58d860"/>
<rect x="1272" y="541.6" width="5" height="1.5" fill="#58d860"/>
</svg>
</div>
<div id="statusb"></div>
<div id="task" style="background:linear-gradient(90deg,#7f97b9 0,#8199bb 98px,#a3bcdc 122px,#a6bfdf 880px,#7f95b5 945px,#7d93b3 1266px);border-top:1px solid #3e485c">
<svg style="left:0;top:-1px" width="1280" height="41" viewBox="0 680 1280 41">
<defs>
<radialGradient id="orb" cx=".5" cy=".78" r=".75"><stop offset="0" stop-color="#38d0f4"/><stop offset=".45" stop-color="#1474cc"/><stop offset=".8" stop-color="#0c4a94"/><stop offset="1" stop-color="#1a3c6c"/></radialGradient>
<linearGradient id="orbt" x1="0" y1="0" x2="0" y2="1"><stop offset="0" stop-color="#c8dce8" stop-opacity=".85"/><stop offset="1" stop-color="#7aa4c4" stop-opacity=".55"/></linearGradient>
<linearGradient id="bt1" x1="0" y1="0" x2="1" y2="0"><stop offset="0" stop-color="#d8d4be"/><stop offset=".5" stop-color="#efe9cf"/><stop offset="1" stop-color="#d9d6c4"/></linearGradient>
<linearGradient id="bt2" x1="0" y1="0" x2="1" y2="0"><stop offset="0" stop-color="#ccd4e6"/><stop offset=".5" stop-color="#e4e8f4"/><stop offset="1" stop-color="#d4daea"/></linearGradient>
<radialGradient id="cg" cx=".4" cy=".35" r=".7"><stop offset="0" stop-color="#b4e030"/><stop offset="1" stop-color="#5aa808"/></radialGradient>
<radialGradient id="cb" cx=".4" cy=".35" r=".7"><stop offset="0" stop-color="#6ab8f8"/><stop offset="1" stop-color="#1c6cd0"/></radialGradient>
<radialGradient id="cyl" cx=".4" cy=".35" r=".7"><stop offset="0" stop-color="#ffe040"/><stop offset="1" stop-color="#e8a408"/></radialGradient>
<radialGradient id="cr" cx=".4" cy=".35" r=".7"><stop offset="0" stop-color="#ff8068"/><stop offset="1" stop-color="#d82818"/></radialGradient>
<radialGradient id="hq" cx=".4" cy=".3" r=".8"><stop offset="0" stop-color="#3848d0"/><stop offset="1" stop-color="#0c1480"/></radialGradient>
</defs>
<circle cx="26.9" cy="700" r="18" fill="url(#orb)" stroke="#16386a" stroke-width=".8"/>
<path d="M9.6,697 A17.4,17.4 0 0 1 44.2,697 Q27,704 9.6,697Z" fill="url(#orbt)"/>
<path d="M17.8,690.6 q4.6,-3 9.4,-.8 l-1.2,8.4 q-4.6,-2.2 -9.4,.8z" fill="#f05a1c"/>
<path d="M28.8,690.2 q4.6,2.4 9.6,-.6 l-1.2,8.6 q-5,3 -9.6,.6z" fill="#8cc83c"/>
<path d="M16.2,700.8 q4.6,-3 9.4,-.8 l-1.2,8.6 q-4.6,-2.2 -9.4,.8z" fill="#3ca4f4"/>
<path d="M27.2,700.6 q4.6,2.4 9.6,-.6 l-1.2,8.6 q-5,3 -9.6,.6z" fill="#fcc828"/>
<circle cx="77.2" cy="708" r="7.6" fill="url(#cyl)"/><circle cx="91.9" cy="706" r="7.6" fill="url(#cr)"/><circle cx="90.4" cy="691.6" r="7.6" fill="url(#cb)"/><circle cx="75.8" cy="693.4" r="7.6" fill="url(#cg)"/>
<rect x="119.5" y="681.5" width="58.5" height="42" rx="3" fill="url(#bt1)" stroke="#f6f4ea" stroke-width="1"/><rect x="118.5" y="680.5" width="60.5" height="44" rx="4" fill="none" stroke="#4a5468" stroke-width="1"/>
<path d="M134,690 h10.5 l1.5,1.6 h18 v22 h-30z" fill="#f2cc78"/><path d="M135,693 h28.4 v20.6 h-28.4z" fill="#fbe9a8"/><path d="M146.5,692.6 h17 v3 h-17z" fill="#f8f4dc"/>
<rect x="136.4" y="688.6" width="2.6" height="1.8" fill="#2a9a3a"/><rect x="143.2" y="690" width="2.6" height="1.8" fill="#c84a30"/><rect x="152.6" y="692.2" width="2.6" height="1.8" fill="#2a8a7a"/>
<path d="M137,703.8 q0,-1.4 1.4,-1.4 h20.4 q1.4,0 1.4,1.4 v11.6 h-5.6 v-7.2 h-12 v7.2 h-5.6z" fill="#7cc4f0" stroke="#4a9ad8" stroke-width=".8"/><path d="M138.4,703.6 h20.2 v2.2 h-20.2z" fill="#b8e4fc"/>
<rect x="182" y="681.5" width="58" height="42" rx="3" fill="url(#bt2)" stroke="#f4f6fc" stroke-width="1"/><rect x="181" y="680.5" width="60" height="44" rx="4" fill="none" stroke="#4a5468" stroke-width="1"/>
<g transform="translate(195.2,683.8)">
<rect x="0" y="0" width="32" height="31" fill="#b4b4b4"/>
<rect x="0" y="0" width="32" height="12" fill="#e81414"/>
<path d="M0,12 h6 l3,-3 h-9z" fill="#fff"/><rect x="0" y="11" width="8" height="3.6" fill="#fff"/><rect x="22" y="11" width="10" height="3.6" fill="#fff"/>
<rect x="3" y="0.8" width="18.6" height="4" fill="#6c6c6c"/><rect x="3" y="0.8" width="3.2" height="2.2" fill="#fff"/><rect x="17.6" y="0.8" width="2.4" height="1.4" fill="#ddd"/>
<rect x="4" y="4.6" width="16.6" height="1.6" fill="#111"/><rect x="4.4" y="6" width="15.8" height="1" fill="#f4f4f4"/>
<path d="M5.6,7 h10.6 v19.4 q0,2.6 -2.6,2.6 h-5.4 q-2.6,0 -2.6,-2.6z" fill="#111"/>
<path d="M7.4,9 h7 v17 q0,1.4 -1.4,1.4 h-4.2 q-1.4,0 -1.4,-1.4z" fill="#f4f4f4"/>
<path d="M7.4,16 l7,-6.4 v2.6 l-7,6.4z M7.4,21.4 l7,-6.4 v2.6 l-7,6.4z M7.6,26.6 l6.8,-6.2 v2.6 l-5,4.6z" fill="#222"/>
<rect x="7.4" y="7.2" width="7" height="2.2" fill="#c8c8c8"/>
<path d="M16.2,5.6 h4 v21 l-2,2.4 h-2z" fill="#e01818"/>
<path d="M20.2,13 l4.4,-1 v14.6 l-4.4,2.4z" fill="#6a6a6a"/><path d="M5.6,29 h14.6 l-1,1.2 h-12.6z" fill="#111"/>
<rect x="0" y="30" width="32" height="1.6" fill="#111"/>
</g>
<rect x="946" y="697" width="14" height="7.6" rx="1" fill="#b8bec8" stroke="#98a0ae" stroke-width=".8"/><path d="M947.6,699h11M947.6,701h11" stroke="#f4f6f8" stroke-width="1" stroke-dasharray="1.4 .8"/><path d="M949.5,703h7.2" stroke="#f4f6f8" stroke-width="1"/><path d="M950,695.4 q3,-2 6,0" stroke="#98a0ae" stroke-width="1" fill="none"/>
<circle cx="974.7" cy="698.2" r="7.2" fill="url(#hq)" stroke="#8ea4d8" stroke-width="1"/>
<text x="974.7" y="702.6" font-family="Liberation Sans" font-weight="bold" font-size="12" fill="#fff" text-anchor="middle">?</text>
<path d="M995.6,689.6h5.2v3.2h-1.6M993.6,691.6h5.2v3.2h-5.2z" fill="none" stroke="#f4f6fa" stroke-width="1.1"/><path d="M994,701.6h5l-2.5,3z" fill="#f4f6fa"/>
<path d="M1011.4,703.6h8.4l-4.2,-4.4z" fill="#f4f6fa"/>
<path d="M1039.7,693.2 q4,1.6 7.6,1.4 q.4,8.6 -7.6,13.4 q-8,-4.8 -7.6,-13.4 q3.6,.2 7.6,-1.4z" fill="#2a7ce0" stroke="#d8ecfc" stroke-width="1.4"/><path d="M1034.8,698l4.9,4.2l4.9,-4.2" fill="none" stroke="#fff" stroke-width="1.8"/><path d="M1036,696.6l3.7,3l3.7,-3" fill="none" stroke="#a8d4fc" stroke-width="1"/>
<circle cx="1063.6" cy="700.8" r="7.2" fill="#f0dc18" stroke="#5a9a18" stroke-width="1.6" stroke-dasharray="9 3"/><path d="M1059.6,700.8h8M1063.6,696.8v8" stroke="#1a8a20" stroke-width="2"/>
<path d="M1082,693.4v14.6" stroke="#f0f0f4" stroke-width="1.6"/><path d="M1083.4,694.2 q3,-1.6 5.4,0 t5.4,0 v7 q-3,1.6 -5.4,0 t-5.4,0z" fill="#f4f4f8" stroke="#c8ccd8" stroke-width=".6"/><circle cx="1092" cy="704.6" r="4" fill="#e43838"/><path d="M1090.2,702.8l3.6,3.6M1093.8,702.8l-3.6,3.6" stroke="#fff" stroke-width="1.3"/>
<rect x="1108.2" y="696.6" width="11" height="8.8" fill="#5e6470" stroke="#f0f2f6" stroke-width="1.2"/><path d="M1110,707.8h8M1114,705.6v2" stroke="#f0f2f6" stroke-width="1.4"/><path d="M1106,694h3.6v4.6h-3.6zM1107.8,698.6v7.4" fill="#5e6470" stroke="#f0f2f6" stroke-width="1.1"/>
<path d="M1128.6,697.6h2.8l4,-3.8v12.8l-4,-3.8h-2.8z" fill="#e8eaf0" stroke="#9aa2b2" stroke-width=".6"/><path d="M1137.4,697.4q1.8,2.8 0,5.6M1139.6,695.4q3.2,4.8 0,9.6M1141.8,693.8q4.2,6.4 0,12.8" fill="none" stroke="#f0f2f6" stroke-width="1.1"/>
<path d="M1237.4,694.6h2v14.4h-2z" fill="#e8eaee"/><rect x="1239.4" y="692.6" width="16" height="17" fill="#fbfbfd" stroke="#d4d8e0" stroke-width=".6"/><rect x="1241.6" y="695.6" width="2.6" height="2.6" fill="#7a7e88"/><path d="M1245.4,696.2h7.6M1245.4,698.4h7.6M1241.6,701h11.4M1241.6,703.4h11.4M1241.6,705.8h9" stroke="#8a8e98" stroke-width=".9"/>
<rect x="1266.5" y="680" width="14" height="41" fill="#6a7c98"/><rect x="1268.5" y="683" width="10" height="36" fill="#586a86"/><path d="M1266.5,680v41" stroke="#b4c0d4" stroke-width="1"/>
</svg>
<span style="left:1174px;top:4.3px;letter-spacing:.35px">10:13</span>
<span style="left:1160.6px;top:23px;letter-spacing:.8px">2020/2/15</span>
</div>
</body></html>
